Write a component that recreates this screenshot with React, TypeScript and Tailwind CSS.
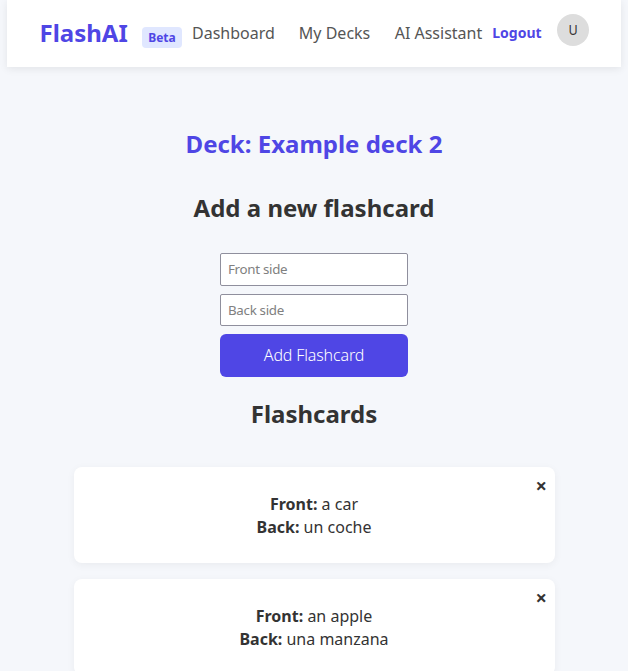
import React from "react";

const cards = [
  { front: "a car", back: "un coche" },
  { front: "an apple", back: "una manzana" },
];

function Header() {
  return (
    <header className="mx-[7px] flex h-[67px] shrink-0 items-center bg-white pb-[2px] pl-[32.5px] shadow-[0_2px_8px_rgba(0,0,0,0.08)]">
      <div className="w-[102.5px] text-2xl font-bold text-[#4f46e5] whitespace-nowrap">FlashAI</div>
      <span className="mt-[9px] flex h-[21px] w-[40px] items-center justify-center rounded bg-[#e0e7ff] pt-px text-xs font-bold text-[#4f46e5]">Beta</span>
      <nav className="ml-[10px] flex gap-6 text-base whitespace-nowrap text-[#555]">
        <a>Dashboard</a>
        <a>My Decks</a>
        <a className="ml-[0.4px]">AI Assistant</a>
      </nav>
      <button className="ml-[10px] text-sm font-bold text-[#4f46e5]">Logout</button>
      <div className="mb-[5px] ml-[15.5px] flex size-8 items-center justify-center rounded-full bg-[#ddd] text-sm text-[#333]"><span className="scale-x-90">U</span></div>
    </header>
  );
}

function Card({ front, back }: { front: string; back: string }) {
  return (
    <article className="relative flex h-24 w-[481px] shrink-0 flex-col items-center justify-center rounded-lg bg-white pt-[2px] text-base leading-[23px] shadow-[0_2px_8px_rgba(0,0,0,0.05)]">
      <p><strong>Front:</strong> {front}</p>
      <p><strong>Back:</strong> {back}</p>
      <button className="absolute top-[7px] right-[7.5px] text-xl leading-[23px] font-bold">×</button>
    </article>
  );
}

export default function App() {
  return (
    <div className="flex h-[671px] flex-col overflow-hidden bg-[#f5f7fb] font-['Noto_Sans',sans-serif] text-[#333]">
      <Header />
      <main className="flex flex-col items-center pt-[61px]">
        <h1 className="text-2xl leading-8 font-bold text-[#4f46e5]">Deck: Example deck 2</h1>
        <h2 className="mt-8 text-2xl leading-8 font-bold">Add a new flashcard</h2>
        <form className="mt-[29px] flex w-[188px] flex-col gap-2">
          <input className="h-[33px] rounded-[2px] border border-[#8f8f9d] bg-white px-[7px] pb-[2px] text-[13.333px] tracking-[-0.3px] placeholder:text-[#808080]" placeholder="Front side" />
          <input className="h-8 rounded-[2px] border border-[#8f8f9d] bg-white px-[7px] text-[13.333px] tracking-[-0.3px] placeholder:text-[#808080]" placeholder="Back side" />
          <button type="button" className="h-[43px] rounded-[6px] bg-[#4f46e5] pb-[2px] text-base font-light tracking-[-0.15px] text-white">Add Flashcard</button>
        </form>
        <h2 className="mt-[21px] text-2xl leading-8 font-bold">Flashcards</h2>
        <section className="mt-[37px] flex flex-col gap-4">
          {cards.map((card) => <Card key={card.front} {...card} />)}
        </section>
      </main>
    </div>
  );
}
